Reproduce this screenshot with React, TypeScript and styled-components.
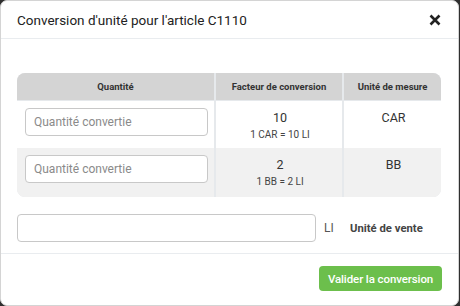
import React from 'react';
import styled, { createGlobalStyle } from 'styled-components';

const GlobalStyle = createGlobalStyle`
  html, body {
    margin: 0;
    padding: 0;
    background: #2f2f2f;
  }
  * {
    box-sizing: border-box;
  }
`;

const Modal = styled.div`
  width: 459px;
  height: 306px;
  background: #fff;
  border: 1px solid #d4d4d4;
  border-radius: 7px;
  font-family: Roboto, 'Liberation Sans', sans-serif;
  color: #212529;
  display: flex;
  flex-direction: column;
  overflow: hidden;
`;

const Header = styled.header`
  height: 38px;
  flex: none;
  display: flex;
  align-items: center;
  justify-content: space-between;
  padding: 0 16px 0 16px;
  border-bottom: 1px solid #e9ecef;

  h1 {
    margin: 0;
    font-size: 13.5px;
    font-weight: 400;
    color: #222;
  }
`;

const CloseButton = styled.button`
  border: 0;
  background: none;
  padding: 0;
  width: 14px;
  height: 14px;
  display: flex;
  align-items: center;
  justify-content: center;
  cursor: pointer;
`;

const Body = styled.div`
  flex: 1;
  padding: 34px 17px 0 16px;
  display: flex;
  flex-direction: column;
  gap: 17px;
  border-bottom: 1px solid #e9ecef;
`;

const Table = styled.div`
  display: grid;
  grid-template-columns: 197px 126px 1fr;
  column-gap: 2px;
  background: #e6e9ec;
  border-radius: 8px;
  overflow: hidden;
`;

const HeadCell = styled.div`
  height: 28px;
  background: #d4d4d4;
  display: flex;
  align-items: center;
  justify-content: center;
  font-size: 9.5px;
  font-weight: 700;
  color: #333;
  border-bottom: 1px solid #e6e9ec;
`;

const Cell = styled.div<{ $shade?: boolean; $tall?: boolean }>`
  background: ${(p) => (p.$shade ? '#f1f1f1' : '#fff')};
  height: ${(p) => (p.$tall ? '49px' : '47px')};
  padding: 7px 6px 0 8px;
  display: flex;
  flex-direction: column;
  align-items: center;
  text-align: center;
`;

const Input = styled.input`
  width: 100%;
  height: 28px;
  border: 1px solid #c8c8c8;
  border-radius: 4px;
  padding: 0 8px;
  font-family: Roboto, 'Liberation Sans', sans-serif;
  font-size: 12px;
  color: #333;
  outline: none;

  &::placeholder {
    color: #8a8a8a;
  }
`;

const Factor = styled.div`
  font-size: 12.5px;
  color: #333;
  line-height: 15px;
  margin-top: 2px;
`;

const Ratio = styled.div`
  font-size: 10px;
  color: #444;
  margin-top: 4px;
`;

const Unit = styled.div`
  font-size: 12.5px;
  color: #333;
  line-height: 15px;
  margin-top: 2px;
`;

const SaleRow = styled.div`
  display: flex;
  align-items: center;
  gap: 8px;

  ${Input} {
    width: 299px;
  }
`;

const SaleUnit = styled.span`
  font-size: 12px;
  color: #555;
  width: 18px;
`;

const SaleLabel = styled.span`
  font-size: 11.3px;
  font-weight: 700;
  color: #444;
`;

const Footer = styled.footer`
  height: 51px;
  flex: none;
  display: flex;
  align-items: center;
  justify-content: flex-end;
  padding: 0 16px 2px;
`;

const ValidateButton = styled.button`
  height: 25px;
  width: 123px;
  padding: 0;
  border: 0;
  border-radius: 4px;
  background: #6cbf4c;
  color: #fff;
  font-family: Roboto, 'Liberation Sans', sans-serif;
  font-size: 11.5px;
  font-weight: 500;
  white-space: nowrap;
  letter-spacing: -0.1px;
  cursor: pointer;
`;

const rows = [
  { factor: '10', ratio: '1 CAR = 10 LI', unit: 'CAR' },
  { factor: '2', ratio: '1 BB = 2 LI', unit: 'BB' },
];

const App: React.FC = () => {
  return (
    <>
      <GlobalStyle />
      <Modal>
        <Header>
          <h1>Conversion d'unité pour l'article C1110</h1>
          <CloseButton aria-label="Fermer">
            <svg width="12" height="12" viewBox="0 0 12 12">
              <path d="M1.5 1.5 L10.5 10.5 M10.5 1.5 L1.5 10.5" stroke="#222" strokeWidth="2.6" />
            </svg>
          </CloseButton>
        </Header>
        <Body>
          <Table>
            <HeadCell>Quantité</HeadCell>
            <HeadCell>Facteur de conversion</HeadCell>
            <HeadCell>Unité de mesure</HeadCell>
            {rows.map((row, i) => (
              <React.Fragment key={row.unit}>
                <Cell $shade={i === 1} $tall={i === 1}>
                  <Input placeholder="Quantité convertie" />
                </Cell>
                <Cell $shade={i === 1} $tall={i === 1}>
                  <Factor>{row.factor}</Factor>
                  <Ratio>{row.ratio}</Ratio>
                </Cell>
                <Cell $shade={i === 1} $tall={i === 1}>
                  <Unit>{row.unit}</Unit>
                </Cell>
              </React.Fragment>
            ))}
          </Table>
          <SaleRow>
            <Input />
            <SaleUnit>LI</SaleUnit>
            <SaleLabel>Unité de vente</SaleLabel>
          </SaleRow>
        </Body>
        <Footer>
          <ValidateButton>Valider la conversion</ValidateButton>
        </Footer>
      </Modal>
    </>
  );
};

export default App;
